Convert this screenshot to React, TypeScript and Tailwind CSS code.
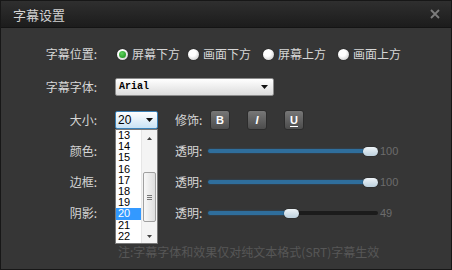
import React from "react";

const cjk = "font-['Noto_Sans_CJK_SC','Noto_Sans',sans-serif]";

function Radio({ checked, label, className = "" }: { checked?: boolean; label: string; className?: string }) {
  return (
    <div className={`flex items-center ${className}`}>
      <div className="w-[11px] h-[11px] rounded-full bg-[radial-gradient(circle_at_40%_35%,#ffffff_35%,#bdbdbd)] flex items-center justify-center shadow-[0_0_1px_#000]">
        {checked && (
          <div className="w-[7px] h-[7px] rounded-full bg-[radial-gradient(circle_at_40%_35%,#5fd35f,#168a16)]" />
        )}
      </div>
      <span className="ml-[4px] text-[12px] text-[#d6d6d6] leading-none">{label}</span>
    </div>
  );
}

function Slider({ value }: { value: number }) {
  const thumb = Math.round((value / 100) * 155);
  return (
    <div className="flex items-center">
      <div className="relative w-[170px] h-[10px]">
        <div className="absolute left-0 right-0 top-[3px] h-[4px] bg-[#1b1b1b] rounded-full" />
        <div
          className="absolute left-0 top-[3px] h-[4px] bg-[#2f6e9c] rounded-full shadow-[0_0_2px_#2a5a7e]"
          style={{ width: thumb + 8 }}
        />
        <div
          className="absolute top-[1px] w-[15px] h-[9px] rounded-full bg-[linear-gradient(#eef4f8,#bcd0dd)] shadow-[0_0_1px_#000]"
          style={{ left: thumb }}
        />
      </div>
      <span className="ml-[2px] text-[11px] text-[#6c6c6c] font-['Liberation_Sans',sans-serif] leading-none">{value}</span>
    </div>
  );
}

function StyleBtn({ children }: { children: React.ReactNode }) {
  return (
    <div className="w-[20px] h-[20px] rounded-[3px] bg-[linear-gradient(#777,#4c4c4c)] border border-[#2c2c2c] flex items-center justify-center text-white text-[11px] font-bold font-['Liberation_Sans',sans-serif] leading-none">
      {children}
    </div>
  );
}

export default function App() {
  const sizes = [13, 14, 15, 16, 17, 18, 19, 20, 21, 22];
  return (
    <div className={`w-[452px] h-[270px] bg-[#363636] border border-[#171717] flex flex-col ${cjk}`}>
      {/* title bar */}
      <div className="h-[27px] shrink-0 bg-[linear-gradient(#2f2f2f,#1c1c1c)] border-b border-[#141414] flex items-center justify-between pl-[12px] pr-[11px]">
        <span className="text-[13px] text-[#d2d2d2] leading-none">字幕设置</span>
        <svg width="10" height="10" viewBox="0 0 10 10">
          <path d="M1 1L9 9M9 1L1 9" stroke="#7c7c7c" strokeWidth="1.8" />
        </svg>
      </div>

      <div className="flex flex-col text-[12px] text-[#d6d6d6] leading-none">
        {/* row 1 */}
        <div className="h-[20px] mt-[16px] flex items-center">
          <span className="w-[96px] text-right">字幕位置:</span>
          <div className="ml-[20px] flex items-center">
            <Radio checked label="屏幕下方" />
            <Radio label="画面下方" className="ml-[8px]" />
            <Radio label="屏幕上方" className="ml-[12px]" />
            <Radio label="画面上方" className="ml-[12px]" />
          </div>
        </div>

        {/* row 2 */}
        <div className="h-[20px] mt-[13px] flex items-center">
          <span className="w-[96px] text-right">字幕字体:</span>
          <div className="ml-[18px] w-[159px] h-[18px] rounded-[2px] border border-[#8c8c8c] bg-[linear-gradient(#ffffff,#dcdcdc)] flex items-center justify-between pl-[3px] pr-[5px]">
            <span className="text-[10px] font-bold text-black font-['Liberation_Mono',monospace]">Arial</span>
            <svg width="7" height="4" viewBox="0 0 7 4">
              <path d="M0 0H7L3.5 4Z" fill="#111" />
            </svg>
          </div>
        </div>

        {/* row 3 */}
        <div className="h-[20px] mt-[13px] flex items-center relative z-10">
          <span className="w-[96px] text-right">大小:</span>
          <div className="ml-[18px] relative">
            <div className="w-[43px] h-[18px] rounded-[2px] border border-[#3b82b8] bg-[linear-gradient(#ffffff,#c9e3f5)] flex items-center justify-between pl-[2px] pr-[4px]">
              <span className="text-[12px] text-black font-['Liberation_Sans',sans-serif]">20</span>
              <svg width="7" height="4" viewBox="0 0 7 4">
                <path d="M0 0H7L3.5 4Z" fill="#111" />
              </svg>
            </div>
            {/* dropdown list */}
            <div className="absolute left-0 top-[18px] w-[43px] h-[115px] bg-white border border-[#7a7a7a] flex">
              <div className="w-[25px] flex flex-col">
                {sizes.map((s) => (
                  <div
                    key={s}
                    className={`h-[11.2px] flex items-center pl-[2px] text-[11px] font-['Liberation_Sans',sans-serif] ${
                      s === 20 ? "bg-[#3399ff] text-white" : "text-black"
                    }`}
                  >
                    {s}
                  </div>
                ))}
              </div>
              <div className="w-[16px] bg-[#f4f4f4] border-l border-[#e6e6e6] flex flex-col items-center">
                <div className="h-[16px] flex items-center justify-center">
                  <svg width="5" height="3" viewBox="0 0 5 3">
                    <path d="M0 3H5L2.5 0Z" fill="#444" />
                  </svg>
                </div>
                <div className="mt-[26px] w-[13px] h-[50px] rounded-[2px] border border-[#a0a0a0] bg-[linear-gradient(90deg,#f8f8f8,#dedede)] flex items-center justify-center">
                  <div className="flex flex-col gap-[1px]">
                    <div className="w-[5px] h-[1px] bg-[#777]" />
                    <div className="w-[5px] h-[1px] bg-[#777]" />
                    <div className="w-[5px] h-[1px] bg-[#777]" />
                  </div>
                </div>
                <div className="mt-auto h-[14px] flex items-center justify-center">
                  <svg width="5" height="3" viewBox="0 0 5 3">
                    <path d="M0 0H5L2.5 3Z" fill="#444" />
                  </svg>
                </div>
              </div>
            </div>
          </div>
          <span className="ml-[17px] w-[35px]">修饰:</span>
          <div className="flex items-center gap-[17px]">
            <StyleBtn>B</StyleBtn>
            <StyleBtn>
              <span className="italic">I</span>
            </StyleBtn>
            <StyleBtn>
              <span className="underline underline-offset-[2px]">U</span>
            </StyleBtn>
          </div>
        </div>

        {/* row 4 */}
        <div className="h-[20px] mt-[11px] flex items-center">
          <span className="w-[96px] text-right">颜色:</span>
          <span className="ml-[78px] w-[33px]">透明:</span>
          <Slider value={100} />
        </div>

        {/* row 5 */}
        <div className="h-[20px] mt-[11px] flex items-center">
          <span className="w-[96px] text-right">边框:</span>
          <span className="ml-[78px] w-[33px]">透明:</span>
          <Slider value={100} />
        </div>

        {/* row 6 */}
        <div className="h-[20px] mt-[11px] flex items-center">
          <span className="w-[96px] text-right">阴影:</span>
          <span className="ml-[78px] w-[33px]">透明:</span>
          <Slider value={49} />
        </div>

        {/* note */}
        <div className="h-[20px] mt-[19px] flex items-center">
          <span className="ml-[117px] text-[#575757]">注:字幕字体和效果仅对纯文本格式(SRT)字幕生效</span>
        </div>
      </div>
    </div>
  );
}
